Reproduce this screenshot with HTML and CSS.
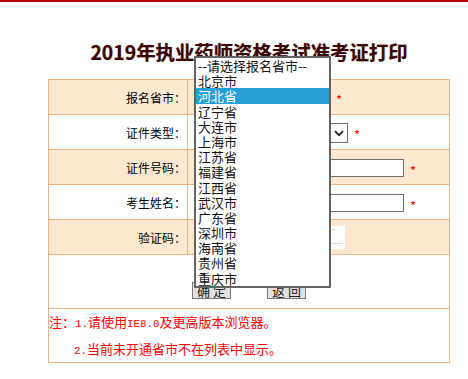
FILE: index.html
```html
<!DOCTYPE html>
<html lang="zh-CN">
<head>
<meta charset="utf-8">
<title>准考证打印</title>
<link rel="stylesheet" href="styles.css">
</head>
<body>
<div class="topbar"></div>
<div class="page">
  <h1 class="title">2019年执业药师资格考试准考证打印</h1>
  <table class="form">
    <tr class="alt">
      <td class="label">报名省市：</td>
      <td class="field">
        <span class="select select-prov"></span><span class="req req-first">*</span>
        <div class="dropdown">
          <div class="opt">--请选择报名省市--</div>
          <div class="opt">北京市</div>
          <div class="opt selected">河北省</div>
          <div class="opt">辽宁省</div>
          <div class="opt">大连市</div>
          <div class="opt">上海市</div>
          <div class="opt">江苏省</div>
          <div class="opt">福建省</div>
          <div class="opt">江西省</div>
          <div class="opt">武汉市</div>
          <div class="opt">广东省</div>
          <div class="opt">深圳市</div>
          <div class="opt">海南省</div>
          <div class="opt">贵州省</div>
          <div class="opt">重庆市</div>
        </div>
      </td>
    </tr>
    <tr>
      <td class="label">证件类型：</td>
      <td class="field">
        <span class="select select-type"><svg class="chev" width="10" height="7" viewBox="0 0 10 7"><path d="M1 1.2 L5 5.2 L9 1.2" fill="none" stroke="#222" stroke-width="1.8"/></svg></span><span class="req">*</span>
      </td>
    </tr>
    <tr class="alt">
      <td class="label">证件号码：</td>
      <td class="field"><span class="input"></span><span class="req">*</span></td>
    </tr>
    <tr>
      <td class="label">考生姓名：</td>
      <td class="field"><span class="input"></span><span class="req">*</span></td>
    </tr>
    <tr class="alt">
      <td class="label">验证码：</td>
      <td class="field"><span class="input input-code"></span><span class="captcha"><span class="cap-mark cap-a"></span><span class="cap-mark cap-b"></span></span></td>
    </tr>
    <tr>
      <td class="buttons" colspan="2">
        <span class="btn">确 定</span><span class="btn">返 回</span>
      </td>
    </tr>
    <tr>
      <td class="notes" colspan="2">
        <div class="note">注：<span class="mono">1.</span>请使用<span class="mono">IE8.0</span>及更高版本浏览器。</div>
        <div class="note note-indent"><span class="mono">2.</span>当前未开通省市不在列表中显示。</div>
      </td>
    </tr>
  </table>
</div>
</body>
</html>
```

FILE: styles.css
```css
html, body {
  margin: 0;
  padding: 0;
  background: #fff;
}
body {
  font-family: "Noto Sans CJK SC", "Noto Sans", sans-serif;
  color: #000;
}
.topbar {
  height: 2px;
  background: #b40000;
}
.page {
  margin-left: 48px;
  width: 402px;
}
.title {
  margin: 0;
  padding-top: 36px;
  height: 41px;
  font-size: 19.4px;
  line-height: 28px;
  font-weight: bold;
  text-align: center;
  color: #3a0606;
  text-shadow: 0 0 1px rgba(58, 6, 6, 0.5);
  white-space: nowrap;
}
.form {
  border-collapse: collapse;
  width: 402px;
  table-layout: fixed;
}
.form td {
  border: 1px solid #efb283;
  padding: 0;
}
.form tr {
  height: 35px;
}
.form tr.alt td {
  background: #fee9d0;
}
.label {
  width: 139px;
  text-align: right;
  font-size: 12px;
  padding-right: 1px !important;
  box-sizing: border-box;
  vertical-align: middle;
}
.field {
  position: relative;
  padding-left: 6px !important;
  font-size: 13px;
  vertical-align: middle;
  white-space: nowrap;
}
.field > span {
  display: inline-block;
  vertical-align: middle;
}
.select {
  position: relative;
  height: 20px;
  box-sizing: border-box;
  border: 1px solid #6e6e6e;
  background: #fff;
}
.select-prov {
  width: 137px;
}
.select-type {
  width: 154px;
}
.chev {
  position: absolute;
  right: 3px;
  top: 6px;
}
.input {
  width: 210px;
  height: 18px;
  box-sizing: border-box;
  border: 1px solid #6e6e6e;
  background: #fff;
}
.input-code {
  width: 70px;
}
.captcha {
  position: relative;
  width: 78px;
  height: 23px;
  margin-left: 3px;
  background: #fff;
}
.cap-mark {
  position: absolute;
  background: #c8c8c8;
}
.cap-a {
  right: 10px;
  top: 3px;
  width: 3px;
  height: 1px;
}
.cap-b {
  right: 2px;
  top: 17px;
  width: 12px;
  height: 1px;
  background: #ddd;
}
.req {
  color: #f00;
  font-size: 13px;
  margin-left: 6px;
  line-height: 1;
  position: relative;
  top: 2px;
}
.req-first {
  margin-left: 5px;
}
.dropdown {
  position: absolute;
  left: 6px;
  top: -24px;
  width: 137px;
  height: 232px;
  box-sizing: border-box;
  border: 2px solid #646464;
  background: #fff;
  z-index: 5;
}
.opt {
  height: 15.2px;
  line-height: 15.2px;
  font-size: 13px;
  padding-left: 2px;
  color: #111;
  white-space: nowrap;
}
.opt.selected {
  background: #299fd8;
  color: #fff;
}
.buttons {
  height: 54px;
  text-align: center;
  vertical-align: top;
  padding-top: 27px !important;
  box-sizing: border-box;
}
.btn {
  display: inline-block;
  width: 39px;
  height: 17px;
  box-sizing: border-box;
  border: 1px solid #7a7a7a;
  background: #e1e1e1;
  font-size: 13px;
  line-height: 15px;
  color: #222;
  text-align: center;
  vertical-align: top;
  margin: 0 18px;
}
.notes {
  height: 53px;
  color: #f00;
  font-size: 13px;
  vertical-align: top;
  box-sizing: border-box;
}
.note {
  line-height: 26px;
  height: 26px;
  white-space: nowrap;
}
.note-indent {
  padding-left: 25px;
  line-height: 27px;
  height: 27px;
}
.mono {
  font-family: "Liberation Mono", "DejaVu Sans Mono", monospace;
  font-size: 10.8px;
}
```
